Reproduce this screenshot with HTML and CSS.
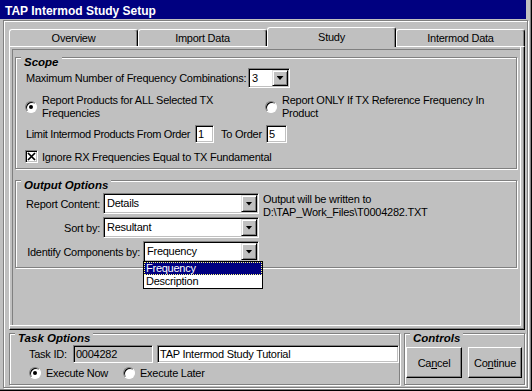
FILE: index.html
```html
<!DOCTYPE html>
<html lang="en">
<head>
  <meta charset="UTF-8">
  <title>TAP Intermod Study Setup</title>
  <link rel="stylesheet" href="styles.css">
</head>
<body>
  <div class="window">
    <div class="titlebar">TAP Intermod Study Setup</div>

    <div class="client">
      <!-- tab strip -->
      <ul class="tabs">
        <li class="tab">Overview</li>
        <li class="tab">Import Data</li>
        <li class="tab active">Study</li>
        <li class="tab">Intermod Data</li>
      </ul>

      <div class="panel">
        <!-- Scope -->
        <div class="group scope">
          <span class="group-title">Scope</span>
          <div class="row">
            <span class="max-label">Maximum Number of Frequency Combinations:</span>
            <div class="combo combo-small"><span class="value">3</span><span class="drop"></span></div>
          </div>
          <div class="row radios">
            <label class="option option-wide"><span class="radio checked"></span><span>Report Products for ALL Selected TX<br>Frequencies</span></label>
            <label class="option"><span class="radio"></span><span>Report ONLY If TX Reference Frequency In<br>Product</span></label>
          </div>
          <div class="row order-row">
            <span class="order-label">Limit Intermod Products From Order</span>
            <span class="field field-one">1</span>
            <span class="to-order">To Order</span>
            <span class="field field-five">5</span>
          </div>
          <div class="row check-row">
            <span class="checkbox"><svg width="9" height="9" viewBox="0 0 9 9"><path d="M1 1L8 8M8 1L1 8" stroke="#000" stroke-width="1.7" fill="none"/></svg></span>
            <span>Ignore RX Frequencies Equal to TX Fundamental</span>
          </div>
        </div>

        <!-- Output Options -->
        <div class="group output">
          <span class="group-title">Output Options</span>
          <div class="output-fields">
            <div class="row">
              <span class="field-label">Report Content:</span>
              <div class="combo combo-wide"><span class="value">Details</span><span class="drop"></span></div>
            </div>
            <div class="row">
              <span class="field-label">Sort by:</span>
              <div class="combo combo-wide"><span class="value">Resultant</span><span class="drop"></span></div>
            </div>
            <div class="row">
              <span class="field-label long">Identify Components by:</span>
              <div class="combo combo-mid">
                <span class="value">Frequency</span><span class="drop"></span>
                <ul class="list">
                  <li class="selected">Frequency</li>
                  <li>Description</li>
                </ul>
              </div>
            </div>
          </div>
          <div class="output-note">Output will be written to<br>D:\TAP_Work_Files\T0004282.TXT</div>
        </div>
      </div>

      <!-- bottom groups -->
      <div class="bottom">
        <div class="group task">
          <span class="group-title">Task Options</span>
          <div class="row task-row">
            <span class="task-label">Task ID:</span>
            <span class="field id-field">0004282</span>
            <span class="field desc-field">TAP Intermod Study Tutorial</span>
          </div>
          <div class="row exec-row">
            <label class="option exec-now"><span class="radio checked"></span><span>Execute Now</span></label>
            <label class="option"><span class="radio"></span><span>Execute Later</span></label>
          </div>
        </div>
        <div class="group controls">
          <span class="group-title">Controls</span>
          <button type="button" class="button cancel">Ca<u>n</u>cel</button>
          <button type="button" class="button continue">Co<u>n</u>tinue</button>
        </div>
      </div>
    </div>
  </div>
</body>
</html>
```

FILE: styles.css
```css
/* base */
body {
  margin: 0;
  background-color: #c0c0c0;
  font-family: "Liberation Sans", Arial, sans-serif;
  font-size: 11px;
  letter-spacing: -0.25px;
  white-space: nowrap;
  color: #000;
}

/* window frame */
.window {
  box-sizing: border-box;
  width: 532px;
  height: 391px;
  border-right: 1px solid #000;
  border-bottom: 1px solid #000;
  box-shadow: inset -1px -1px #808080;
}

.titlebar {
  box-sizing: border-box;
  width: 526px;
  height: 19px;
  padding: 3px 0 0 5px;
  background-color: #000080;
  color: #fff;
  font-size: 12px;
  font-weight: bold;
  line-height: 16px;
  letter-spacing: 0;
}

.client {
  box-sizing: border-box;
  width: 525px;
  height: 368px;
  margin: 1px 0 0 3px;
  padding: 6px 2px 0 5px;
  border: 1px solid #808080;
  box-shadow: inset 1px 1px #fff, 1px 1px #fff;
}

/* tabs */
.tabs {
  display: flex;
  align-items: flex-end;
  height: 19px;
  margin: 0;
  padding: 0;
  list-style: none;
}

.tab {
  box-sizing: border-box;
  width: 129px;
  height: 17px;
  border: 1px solid #fff;
  border-right-color: #000;
  border-bottom: 0;
  border-radius: 3px 3px 0 0;
  box-shadow: inset -1px 0 #808080;
  text-align: center;
  line-height: 16px;
}

.tab.active {
  position: relative;
  z-index: 1;
  height: 20px;
  margin-bottom: -1px;
  background-color: #c0c0c0;
  line-height: 18px;
}

/* tab page with its inner sunken frame */
.panel {
  box-sizing: border-box;
  height: 284px;
  padding: 10px 7px 0 5px;
  border: 1px solid #000;
  border-top-color: #fff;
  border-left-color: #fff;
  box-shadow:
    inset -1px -1px #808080,
    inset -3px -3px #c0c0c0,
    inset -4px -4px #fff,
    inset 2px 2px #c0c0c0,
    inset 3px 3px #808080;
}

/* etched group box */
.group {
  position: relative;
  box-sizing: border-box;
  border: 1px solid #808080;
  box-shadow: inset 1px 1px #fff, 1px 1px #fff;
}

.group-title {
  position: absolute;
  top: -2px;
  left: 5px;
  padding: 0 3px;
  background-color: #c0c0c0;
  font-size: 11.5px;
  font-weight: bold;
  font-style: italic;
  line-height: 12px;
  letter-spacing: 0;
}

.row {
  display: flex;
  align-items: center;
}

.row > * {
  flex: none;
}

/* controls */
.combo {
  position: relative;
  box-sizing: border-box;
  display: flex;
  height: 21px;
  padding: 1px;
  border: 1px solid #fff;
  border-top-color: #808080;
  border-left-color: #808080;
  box-shadow: inset 1px 1px #000, inset -1px -1px #c0c0c0;
  background-color: #fff;
}

.combo .value {
  flex: 1;
  padding-left: 2px;
  line-height: 17px;
}

.combo .drop {
  box-sizing: border-box;
  display: flex;
  align-items: center;
  justify-content: center;
  width: 16px;
  border: 1px solid #000;
  border-top-color: #dfdfdf;
  border-left-color: #dfdfdf;
  box-shadow: inset 1px 1px #fff, inset -1px -1px #808080;
  background-color: #c0c0c0;
}

.combo .drop::after {
  content: "";
  width: 7px;
  height: 4px;
  background-color: #000;
  clip-path: polygon(0 0, 100% 0, 50% 100%);
}

.field {
  box-sizing: border-box;
  height: 18px;
  padding: 0 2px;
  border: 1px solid #fff;
  border-top-color: #808080;
  border-left-color: #808080;
  box-shadow: inset 1px 1px #000, inset -1px -1px #c0c0c0;
  background-color: #fff;
  line-height: 16px;
}

.option {
  display: flex;
  align-items: center;
  gap: 5px;
}

.radio {
  position: relative;
  box-sizing: border-box;
  flex: none;
  width: 12px;
  height: 12px;
  border: 1px solid;
  border-color: #808080 #fff #fff #808080;
  border-radius: 50%;
  box-shadow: inset 1px 1px #000;
  background-color: #fff;
}

.radio.checked::after {
  content: "";
  position: absolute;
  top: 3px;
  left: 3px;
  width: 4px;
  height: 4px;
  border-radius: 50%;
  background-color: #000;
}

.checkbox {
  box-sizing: border-box;
  display: flex;
  align-items: center;
  justify-content: center;
  width: 13px;
  height: 13px;
  border: 1px solid #fff;
  border-top-color: #808080;
  border-left-color: #808080;
  box-shadow: inset 1px 1px #000, inset -1px -1px #c0c0c0;
  background-color: #fff;
}

.button {
  box-sizing: border-box;
  height: 31px;
  padding: 0;
  border: 1px solid #000;
  border-top-color: #fff;
  border-left-color: #fff;
  box-shadow: inset -1px -1px #808080;
  background-color: #c0c0c0;
  color: #000;
  font: inherit;
  letter-spacing: inherit;
}

/* Scope */
.scope {
  padding: 10px 0 5px 10px;
}

.max-label {
  width: 222px;
}

.combo-small {
  width: 42px;
  height: 20px;
}

.radios {
  margin-top: 6px;
  line-height: 13px;
}

.option-wide {
  width: 240px;
  margin-left: -1px;
}

.order-row {
  margin-top: 5px;
}

.order-label {
  width: 166px;
  margin-right: 3px;
  letter-spacing: -0.35px;
}

.field-one {
  width: 19px;
}

.to-order {
  width: 42px;
  margin: 0 3px 0 7px;
}

.field-five {
  width: 21px;
}

.check-row {
  gap: 4px;
  margin-top: 7px;
  margin-left: -1px;
}

/* Output Options */
.output {
  display: flex;
  margin-top: 11px;
  padding: 12px 0 5px 10px;
}

.output-fields {
  display: flex;
  flex-direction: column;
  gap: 3px;
}

.field-label {
  width: 74px;
  margin-right: 3px;
  text-align: right;
}

.field-label.long {
  width: 114px;
}

.combo-wide {
  width: 156px;
}

.combo-mid {
  width: 116px;
}

.output-note {
  margin-left: 4px;
  line-height: 13px;
}

.list {
  position: absolute;
  top: 100%;
  left: -1px;
  z-index: 2;
  width: 118px;
  margin: 0;
  padding: 0;
  list-style: none;
  border: 1px solid #000;
  background-color: #fff;
}

.list li {
  height: 13px;
  padding-left: 2px;
  line-height: 13px;
}

.list li.selected {
  outline: 1px dotted #ffff80;
  outline-offset: -1px;
  background-color: #000080;
  color: #fff;
}

/* bottom groups */
.bottom {
  display: flex;
  gap: 4px;
  margin-top: 3px;
}

.task {
  width: 391px;
  height: 52px;
  padding: 11px 0 0 19px;
}

.task-label {
  width: 44px;
}

.id-field {
  width: 80px;
  background-color: #c0c0c0;
}

.desc-field {
  width: 242px;
  margin-left: 4px;
}

.exec-row {
  margin-top: 4px;
}

.exec-now {
  width: 94px;
}

.controls {
  display: flex;
  align-items: flex-start;
  gap: 6px;
  width: 121px;
  height: 52px;
  padding: 13px 0 0 1px;
}

.cancel {
  width: 56px;
}

.continue {
  width: 54px;
}
```
